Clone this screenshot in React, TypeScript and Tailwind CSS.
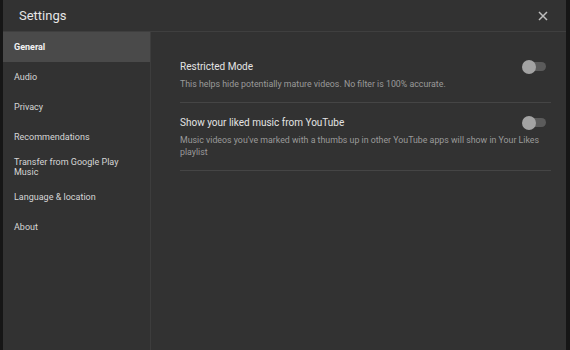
import React from "react";

function Toggle() {
  return (
    <div className="relative w-[24px] h-[14px] shrink-0 mr-[5px]">
      <div className="absolute left-[4px] right-0 top-[2.5px] h-[9px] rounded-full bg-[#5b5b5b]" />
      <div className="absolute left-0 top-0 w-[14px] h-[14px] rounded-full bg-[#a3a3a3]" />
    </div>
  );
}

export default function App() {
  const items = [
    "General",
    "Audio",
    "Privacy",
    "Recommendations",
    "Transfer from Google Play Music",
    "Language & location",
    "About",
  ];
  return (
    <div
      className="w-[570px] h-[350px] bg-[#161616] flex pl-[3px] pr-[4px] overflow-hidden"
      style={{ fontFamily: "Roboto, 'Noto Sans', sans-serif" }}
    >
      <div className="flex-1 bg-[#323232] flex flex-col">
        <div className="h-[32px] shrink-0 flex items-center justify-between pl-[16px] pr-[18px] border-b border-[#3f3f3f]">
          <span className="text-[13px] text-[#e6e6e6]">Settings</span>
          <svg width="10" height="10" viewBox="0 0 10 10">
            <path d="M1 1L9 9M9 1L1 9" stroke="#bdbdbd" strokeWidth="1.5" />
          </svg>
        </div>
        <div className="flex flex-1">
          <div className="w-[148px] shrink-0 border-r border-[#3d3d3d] flex flex-col">
            {items.map((t, i) => (
              <div
                key={t}
                className={
                  "h-[30px] flex items-center pl-[11px] pr-[8px] text-[9px] " +
                  (i === 0
                    ? "bg-[#4a4a4a] font-bold text-[#f2f2f2] leading-[11px]"
                    : i === 4
                    ? "text-[#d6d6d6] leading-[10px]"
                    : "text-[#d6d6d6] leading-[11px]")
                }
              >
                {i === 4 ? (
                  <span>
                    Transfer from Google Play
                    <br />
                    Music
                  </span>
                ) : (
                  t
                )}
              </div>
            ))}
          </div>
          <div className="flex-1 pl-[29px] pr-[15px] pt-[27px]">
            <div className="border-b border-[#454545] pb-[12px]">
              <div className="flex items-center justify-between">
                <span className="text-[10px] text-[#e4e4e4]">Restricted Mode</span>
                <Toggle />
              </div>
              <div className="mt-[4px] text-[8.8px] leading-[12px] text-[#9a9a9a]">
                This helps hide potentially mature videos. No filter is 100% accurate.
              </div>
            </div>
            <div className="border-b border-[#454545] pt-[12px] pb-[12px]">
              <div className="flex items-center justify-between">
                <span className="text-[10px] text-[#e4e4e4]">Show your liked music from YouTube</span>
                <Toggle />
              </div>
              <div className="mt-[4px] text-[8.8px] leading-[12px] text-[#9a9a9a]">
                Music videos you've marked with a thumbs up in other YouTube apps will show in Your Likes playlist
              </div>
            </div>
          </div>
        </div>
      </div>
    </div>
  );
}
